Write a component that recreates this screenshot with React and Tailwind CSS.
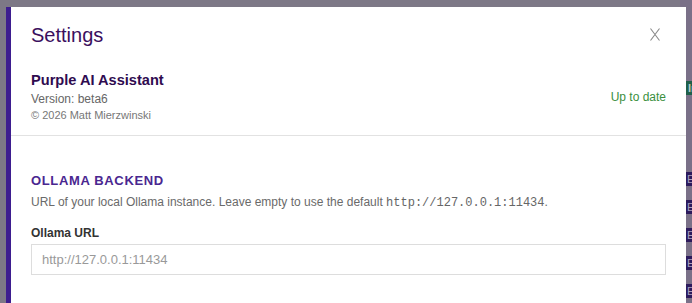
import React from "react";

const badges = ["E", "E", "E", "E", "E"];

export default function App() {
  return (
    <div
      className="relative h-[303px] w-full overflow-hidden bg-[#7d7886]"
      style={{ fontFamily: '"Liberation Sans", Arial, sans-serif' }}
    >
      {/* page behind the overlay */}
      <div className="flex h-full justify-end">
        <div className="flex w-[12px] flex-col bg-[#7a7088] pt-[81px]">
          <div className="h-[14px] bg-[#1f5f4a] pl-[8px] text-[11px] leading-[14px] font-bold text-[#b9c9c2]">
            In
          </div>
          <div className="mt-[77px] flex flex-col gap-[14px]">
            {badges.map((b, i) => (
              <div
                key={i}
                className="h-[14px] bg-[#2d1a5c] pl-[7px] text-[11px] leading-[14px] text-[#a9a1bd]"
              >
                {b}
              </div>
            ))}
          </div>
        </div>
      </div>

      {/* modal */}
      <div className="absolute left-[6px] top-[7px] h-[320px] w-[680px] border-l-[5px] border-[#3d1d8f] bg-white">
        <div className="flex items-start justify-between px-5 pt-4">
          <h1 className="text-[20px] leading-[24px] text-[#3b0f5e]">Settings</h1>
          <button className="mr-[6px] mt-[5px]" aria-label="Close">
            <svg width="10" height="13" viewBox="0 0 10 13" fill="none">
              <path d="M0.5 0.5L9.5 12.5M9.5 0.5L0.5 12.5" stroke="#8a8a8a" strokeWidth="1.1" />
            </svg>
          </button>
        </div>

        <div className="flex items-center justify-between border-b border-[#e2e2e2] px-5 pt-[24px] pb-[13px]">
          <div>
            <div className="text-[14.6px] leading-[19px] font-bold text-[#2f0b50]">Purple AI Assistant</div>
            <div className="mt-[1px] text-[12px] leading-[16px] text-[#666]">Version: beta6</div>
            <div className="mt-[1px] text-[11px] leading-[14px] text-[#777]">© 2026 Matt Mierzwinski</div>
          </div>
          <div className="text-[12px] leading-[16px] text-[#3b8f3e]">Up to date</div>
        </div>

        <div className="px-5 pt-[37px]">
          <h2 className="text-[13px] leading-[16px] font-bold tracking-[0.05em] uppercase text-[#4a2790]">
            Ollama Backend
          </h2>
          <p className="mt-[5px] text-[12px] leading-[16px] text-[#6a6a6a]">
            URL of your local Ollama instance. Leave empty to use the default{" "}
            <code
              className="text-[12px] text-[#666]"
              style={{ fontFamily: '"Liberation Mono", monospace' }}
            >
              http://127.0.0.1:11434
            </code>
            .
          </p>
          <label className="mt-[14px] block text-[12px] leading-[16px] font-bold text-[#333]">Ollama URL</label>
          <input
            className="mt-[3px] block h-[31px] w-full border border-[#dddddd] pl-[10px] text-[13px] text-[#333] outline-none placeholder:text-[#999]"
            placeholder="http://127.0.0.1:11434"
          />
        </div>
      </div>
    </div>
  );
}
